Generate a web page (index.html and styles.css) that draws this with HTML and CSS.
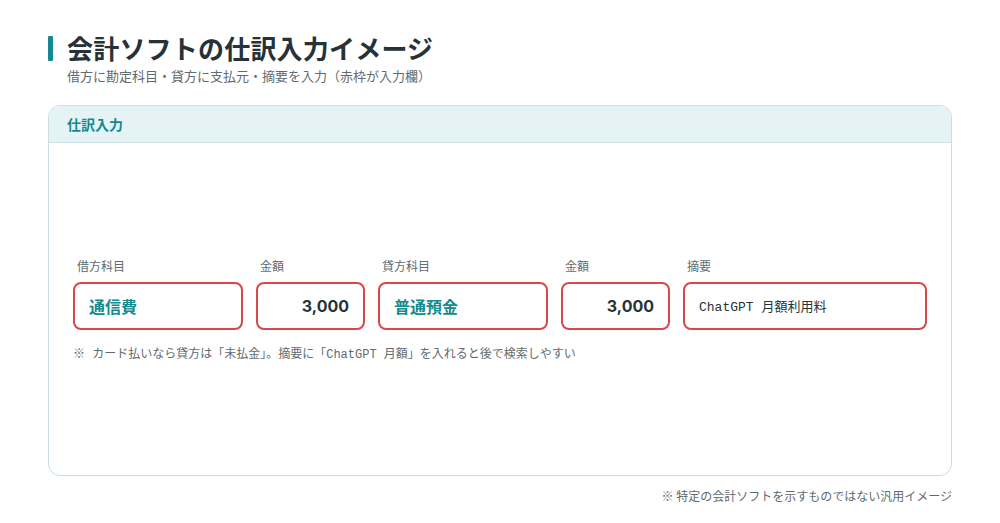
FILE: index.html
```html
<!DOCTYPE html>
<html lang="ja">
<head>
<meta charset="utf-8">
<link rel="stylesheet" href="styles.css">
</head>
<body>
<div class="page">
  <header class="head">
    <h1 class="title">会計ソフトの仕訳入力イメージ</h1>
    <p class="sub">借方に勘定科目・貸方に支払元・摘要を入力（赤枠が入力欄）</p>
  </header>
  <section class="card">
    <div class="card-head">仕訳入力</div>
    <div class="card-body">
      <div class="fields">
        <div class="field">
          <div class="label">借方科目</div>
          <div class="box acct">通信費</div>
        </div>
        <div class="field">
          <div class="label">金額</div>
          <div class="box amt">3,000</div>
        </div>
        <div class="field">
          <div class="label">貸方科目</div>
          <div class="box acct">普通預金</div>
        </div>
        <div class="field">
          <div class="label">金額</div>
          <div class="box amt">3,000</div>
        </div>
        <div class="field">
          <div class="label">摘要</div>
          <div class="box memo">ChatGPT 月額利用料</div>
        </div>
      </div>
      <p class="note">※ カード払いなら貸方は「未払金」。摘要に「ChatGPT 月額」を入れると後で検索しやすい</p>
    </div>
  </section>
  <p class="foot">※ 特定の会計ソフトを示すものではない汎用イメージ</p>
</div>
</body>
</html>
```
FILE: styles.css
```css
* { box-sizing: border-box; }
html, body { margin: 0; padding: 0; background: #ffffff; }
body {
  font-family: "Noto Sans CJK JP", "Noto Sans", sans-serif;
  color: #263238;
}
.page {
  width: 1000px;
  height: 523px;
  padding: 30px 48px 0 48px;
}
.head { padding-left: 19px; position: relative; }
.head::before {
  content: "";
  position: absolute;
  left: 0;
  top: 6px;
  width: 5px;
  height: 25px;
  background: #138a8f;
  border-radius: 1px;
}
.title {
  margin: 0;
  font-size: 26px;
  line-height: 36px;
  font-weight: 700;
  color: #263238;
  letter-spacing: 0.2px;
}
.sub {
  margin: 1px 0 0;
  font-size: 13px;
  line-height: 18px;
  color: #5f6b70;
}
.card {
  margin-top: 20px;
  height: 371px;
  border: 1px solid #c8dfe3;
  border-radius: 12px;
  overflow: hidden;
  display: flex;
  flex-direction: column;
}
.card-head {
  height: 37px;
  background: #e6f3f5;
  border-bottom: 1px solid #c8dfe3;
  padding-left: 18px;
  font-size: 14px;
  font-weight: 700;
  color: #138a8f;
  line-height: 36px;
}
.card-body {
  flex: 1;
  display: flex;
  flex-direction: column;
  justify-content: center;
  padding: 2px 24px 0;
}
.fields {
  display: grid;
  grid-template-columns: 170px 109px 170px 109px 1fr;
  gap: 13px;
}
.label {
  font-size: 12px;
  line-height: 16px;
  color: #5f6b70;
  padding-left: 4px;
  margin-bottom: 8px;
}
.box {
  height: 48px;
  border: 2px solid #d9474a;
  border-radius: 8px;
  display: flex;
  align-items: center;
  padding: 0 14px;
  background: #fff;
}
.acct {
  font-size: 16px;
  font-weight: 700;
  color: #138a8f;
}
.amt {
  justify-content: flex-end;
  font-family: "Inter", "Noto Sans", sans-serif;
  font-size: 16px;
  font-weight: 700;
  color: #263238;
  padding-right: 14px;
}
.memo {
  font-family: "Liberation Mono", "Noto Sans CJK JP", monospace;
  font-size: 13px;
  color: #263238;
}
.note {
  margin: 17px 0 0;
  font-family: "Liberation Mono", "Noto Sans CJK JP", monospace;
  font-size: 12px;
  line-height: 16px;
  color: #5f6b70;
}
.foot {
  margin: 12px 0 0;
  text-align: right;
  font-size: 12px;
  line-height: 16px;
  color: #5f6b70;
}
```
